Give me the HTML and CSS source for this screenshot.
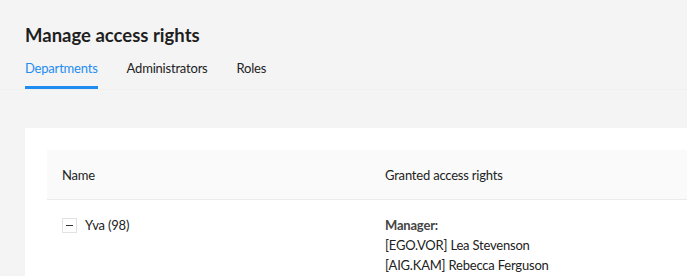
FILE: index.html
```html
<!DOCTYPE html>
<html lang="en">
<head>
    <meta charset="UTF-8">
    <title>Manage access rights</title>
    <link rel="stylesheet" href="styles.css">
</head>
<body>
    <div class="page">
        <h1 class="page-title">Manage access rights</h1>

        <nav class="tabs">
            <a class="tab active">Departments</a>
            <a class="tab">Administrators</a>
            <a class="tab">Roles</a>
        </nav>

        <div class="card">
            <div class="table">
                <div class="table-head">
                    <div class="col-name">Name</div>
                    <div class="col-rights">Granted access rights</div>
                </div>
                <div class="table-row">
                    <div class="col-name">
                        <span class="toggle"></span>
                        <span>Yva (98)</span>
                    </div>
                    <div class="col-rights">
                        <div class="role">Manager:</div>
                        <div>[EGO.VOR] Lea Stevenson</div>
                        <div>[AIG.KAM] Rebecca Ferguson</div>
                    </div>
                </div>
            </div>
        </div>
    </div>
</body>
</html>
```

FILE: styles.css
```css
* {
    margin: 0;
    padding: 0;
    box-sizing: border-box;
}

body {
    font-family: 'Lato', 'Open Sans', sans-serif;
    background-color: #f4f4f4;
    color: #222;
    overflow: hidden;
}

.page {
    padding: 22px 0 0 25px;
}

.page-title {
    font-size: 18.5px;
    font-weight: 700;
    line-height: 26px;
    color: #1f1f1f;
}

.tabs {
    display: flex;
    gap: 29px;
    margin-top: 10px;
    margin-left: -25px;
    padding-left: 25px;
    border-bottom: 1px solid #efefef;
}

.tab {
    font-size: 13px;
    letter-spacing: -0.2px;
    line-height: 20px;
    padding-bottom: 8px;
    border-bottom: 3px solid transparent;
    color: #222;
}

.tab.active {
    color: #1e8cf0;
    border-bottom-color: #1e8cf0;
}

.card {
    margin-top: 38px;
    background-color: #fff;
    padding: 22px 0 0 22px;
    height: 200px;
}

.table-head {
    display: flex;
    background-color: #fafafa;
    border-bottom: 1px solid #ebebeb;
    height: 50px;
    align-items: center;
    font-size: 13px;
    letter-spacing: -0.2px;
}

.table-row {
    display: flex;
    align-items: flex-start;
    padding-top: 15px;
    font-size: 13px;
    letter-spacing: -0.2px;
    line-height: 20px;
}

.col-name {
    width: 338px;
    padding-left: 15px;
    display: flex;
    align-items: center;
    gap: 8px;
}

.toggle {
    width: 15px;
    height: 15px;
    border: 1px solid #e2e2e2;
    position: relative;
}

.toggle::after {
    content: '';
    position: absolute;
    left: 3px;
    right: 3px;
    top: 6px;
    height: 1px;
    background-color: #333;
}

.role {
    font-weight: 700;
    color: #444;
}
```
